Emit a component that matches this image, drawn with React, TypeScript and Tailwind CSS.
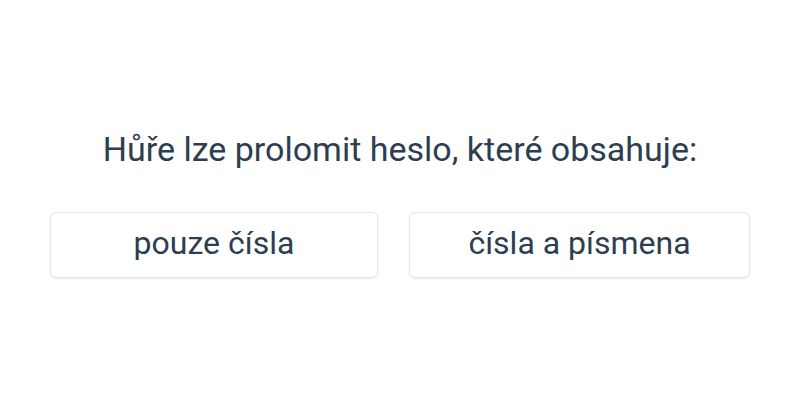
export default function App() {
  return (
    <div className="flex h-[400px] w-[800px] flex-col items-center bg-white font-['Roboto',sans-serif] text-[#2c3e50]">
      <h1 className="mt-[129px] text-[34px] leading-[40px]">Hůře lze prolomit heslo, které obsahuje:</h1>
      <div className="mt-[43px] flex gap-[31px]">
        <button className="h-[66px] w-[328px] rounded-md border border-[#e3e6ea] bg-white pb-1 text-[32px] shadow-[0_1px_3px_rgba(0,0,0,0.08)]">
          pouze čísla
        </button>
        <button className="h-[66px] w-[341px] rounded-md border border-[#e3e6ea] bg-white pb-1 text-[32px] shadow-[0_1px_3px_rgba(0,0,0,0.08)]">
          čísla a písmena
        </button>
      </div>
    </div>
  );
}
